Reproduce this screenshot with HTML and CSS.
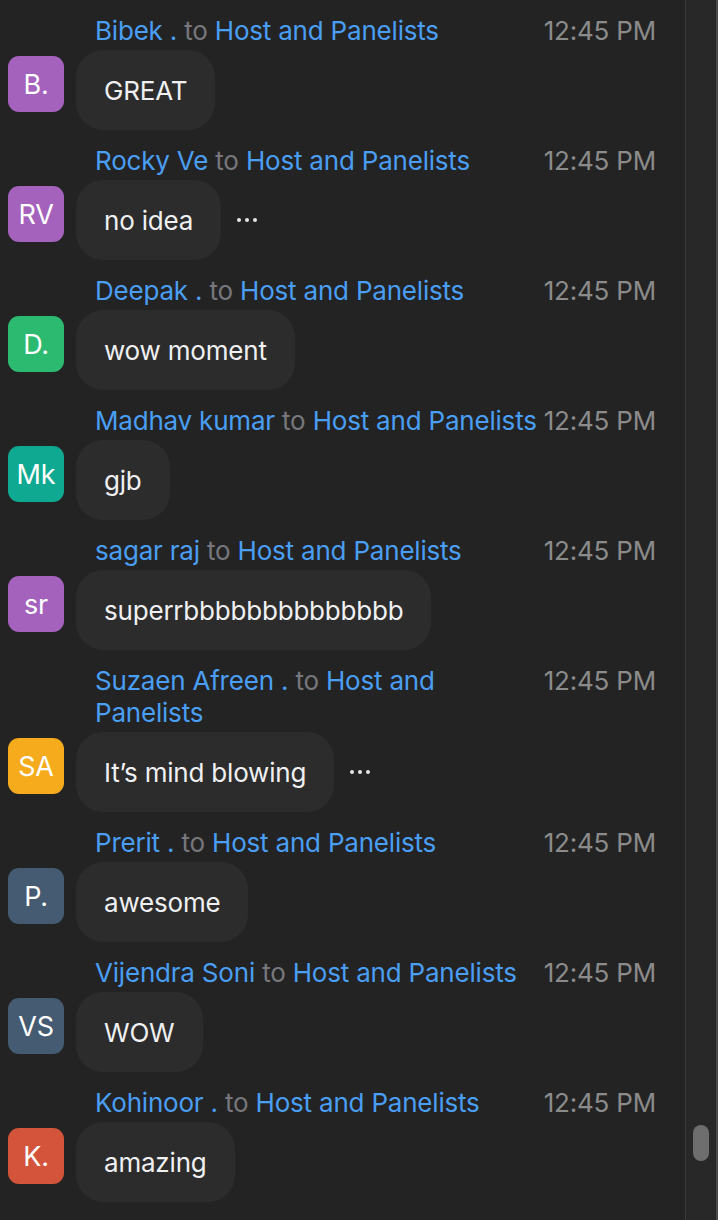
FILE: index.html
```html
<!DOCTYPE html>
<html>
<head>
<meta charset="utf-8">
<link rel="stylesheet" href="styles.css">
</head>
<body>
<div class="app">
  <div class="chat">
    <div class="msg">
      <div class="head"><div class="who"><span class="name">Bibek .</span> <span class="to">to</span> <span class="name">Host and Panelists</span></div><div class="time">12:45 PM</div></div>
      <div class="line"><div class="avatar purple">B.</div><div class="bubble">GREAT</div></div>
    </div>
    <div class="msg">
      <div class="head"><div class="who"><span class="name">Rocky Ve</span> <span class="to">to</span> <span class="name">Host and Panelists</span></div><div class="time">12:45 PM</div></div>
      <div class="line"><div class="avatar purple">RV</div><div class="bubble">no idea</div><div class="more"><i></i><i></i><i></i></div></div>
    </div>
    <div class="msg">
      <div class="head"><div class="who"><span class="name">Deepak .</span> <span class="to">to</span> <span class="name">Host and Panelists</span></div><div class="time">12:45 PM</div></div>
      <div class="line"><div class="avatar green">D.</div><div class="bubble">wow moment</div></div>
    </div>
    <div class="msg">
      <div class="head"><div class="who"><span class="name">Madhav kumar</span> <span class="to">to</span> <span class="name">Host and Panelists</span></div><div class="time">12:45 PM</div></div>
      <div class="line"><div class="avatar teal">Mk</div><div class="bubble">gjb</div></div>
    </div>
    <div class="msg">
      <div class="head"><div class="who"><span class="name">sagar raj</span> <span class="to">to</span> <span class="name">Host and Panelists</span></div><div class="time">12:45 PM</div></div>
      <div class="line"><div class="avatar purple">sr</div><div class="bubble">superrbbbbbbbbbbbbbb</div></div>
    </div>
    <div class="msg">
      <div class="head"><div class="who"><span class="name">Suzaen Afreen .</span> <span class="to">to</span> <span class="name">Host and</span> <span class="name">Panelists</span></div><div class="time">12:45 PM</div></div>
      <div class="line"><div class="avatar orange">SA</div><div class="bubble">It’s mind blowing</div><div class="more"><i></i><i></i><i></i></div></div>
    </div>
    <div class="msg">
      <div class="head"><div class="who"><span class="name">Prerit .</span> <span class="to">to</span> <span class="name">Host and Panelists</span></div><div class="time">12:45 PM</div></div>
      <div class="line"><div class="avatar slate">P.</div><div class="bubble">awesome</div></div>
    </div>
    <div class="msg">
      <div class="head"><div class="who"><span class="name">Vijendra Soni</span> <span class="to">to</span> <span class="name">Host and Panelists</span></div><div class="time">12:45 PM</div></div>
      <div class="line"><div class="avatar slate">VS</div><div class="bubble">WOW</div></div>
    </div>
    <div class="msg">
      <div class="head"><div class="who"><span class="name">Kohinoor .</span> <span class="to">to</span> <span class="name">Host and Panelists</span></div><div class="time">12:45 PM</div></div>
      <div class="line"><div class="avatar red">K.</div><div class="bubble">amazing</div></div>
    </div>
  </div>
  <div class="track"><div class="thumb"></div></div>
</div>
</body>
</html>
```

FILE: styles.css
```css
html, body {
  margin: 0;
  padding: 0;
  background: #232323;
  height: 1220px;
  overflow: hidden;
}
body {
  font-family: Inter, "Noto Sans", sans-serif;
  font-size: 26px;
  letter-spacing: -0.2px;
}
.app {
  display: flex;
  height: 1220px;
}
.chat {
  width: 686px;
  flex: none;
  border-right: 1px solid #3a3a3a;
  padding-top: 15px;
  box-sizing: border-box;
}
.msg {
  margin-bottom: 15px;
}
.head {
  display: flex;
  align-items: flex-start;
  padding-left: 95px;
  padding-right: 29px;
  line-height: 32px;
}
.who {
  flex: 1;
  min-width: 0;
}
.name { color: #4a9ef3; }
.to { color: #77777d; }
.time {
  flex: none;
  color: #8b8b8b;
  margin-left: 3px;
  white-space: nowrap;
}
.line {
  display: flex;
  align-items: flex-start;
  margin-top: 3px;
  padding-left: 8px;
}
.avatar {
  width: 56px;
  height: 56px;
  margin-top: 6px;
  border-radius: 11px;
  color: #fff;
  display: flex;
  align-items: center;
  justify-content: center;
  font-size: 27px;
  flex: none;
}
.purple { background: #a462bd; }
.green { background: #2bba70; }
.teal { background: #0fa991; }
.orange { background: #f5ab1b; }
.slate { background: #445b72; }
.red { background: #d3533b; }
.bubble {
  margin-left: 12px;
  height: 80px;
  padding: 0 28px;
  border-radius: 27px;
  background: #2c2c2c;
  color: #f0f0f2;
  display: flex;
  align-items: center;
  white-space: nowrap;
}
.more {
  display: flex;
  align-items: center;
  gap: 4px;
  height: 80px;
  margin-left: 16px;
}
.more i {
  width: 4px;
  height: 4px;
  border-radius: 50%;
  background: #e6e6e6;
}
.track {
  flex: 1;
  background: #282828;
  border-right: 2px solid #4a4a4a;
  padding-top: 1125px;
  box-sizing: border-box;
}
.thumb {
  width: 16px;
  height: 36px;
  margin-left: 7px;
  border-radius: 8px;
  background: #6e6e6e;
}
```
